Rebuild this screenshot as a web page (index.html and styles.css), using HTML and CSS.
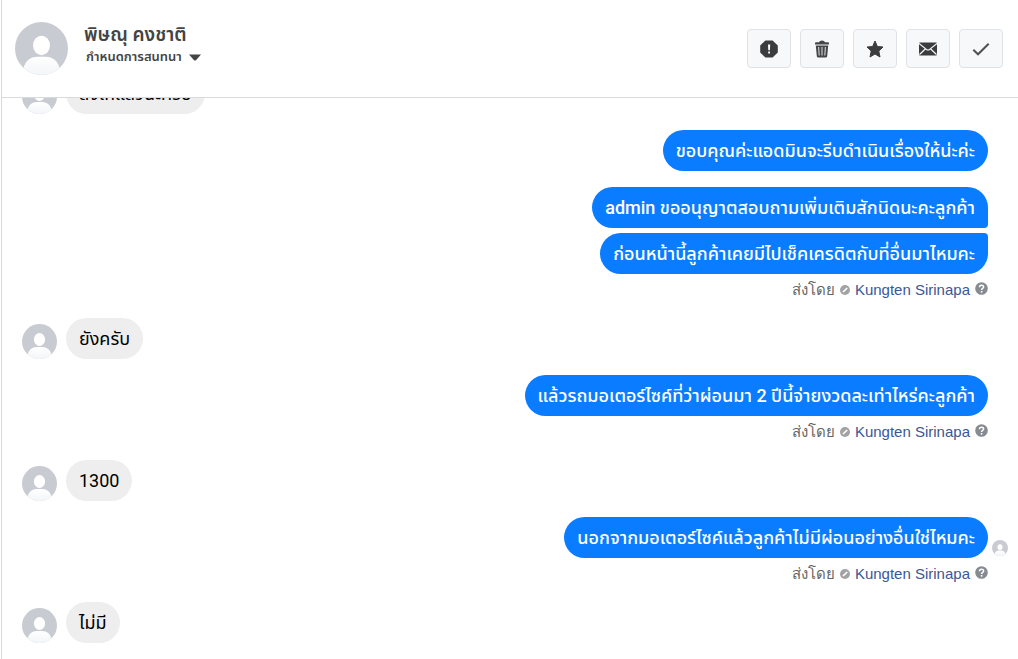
FILE: index.html
```html
<!DOCTYPE html>
<html lang="th">
<head>
    <meta charset="UTF-8">
    <meta name="viewport" content="width=device-width, initial-scale=1.0">
    <title>พิษณุ คงชาติ</title>
    <link rel="stylesheet" href="styles.css">
</head>
<body>
    <svg class="defs" aria-hidden="true">
        <defs>
            <linearGradient id="bodyFade" x1="0" y1="0" x2="0" y2="1">
                <stop offset="0" stop-color="#ffffff"/>
                <stop offset="1" stop-color="#f3f5f8"/>
            </linearGradient>
            <clipPath id="round"><circle cx="26" cy="26" r="26"/></clipPath>
            <symbol id="person" viewBox="0 0 52 52">
                <g clip-path="url(#round)">
                    <rect width="52" height="52" fill="#c8cbd1"/>
                    <ellipse cx="26" cy="23" rx="8.3" ry="9.5" fill="#fff"/>
                    <path d="M8 52V46C10 38 15 34 22 34H30C37 34 42 38 44 46V52Z" fill="url(#bodyFade)"/>
                </g>
            </symbol>
            <symbol id="pen" viewBox="0 0 10 10">
                <circle cx="5" cy="5" r="5" fill="#a3a3a3"/>
                <path d="M3 7L7.2 3" stroke="#fff" stroke-width="1.7"/>
            </symbol>
            <symbol id="help" viewBox="0 0 13 13">
                <circle cx="6.5" cy="6.5" r="6.3" fill="#868a91"/>
                <path d="M4.5 5.2C4.5 2.5 8.6 2.5 8.6 4.9C8.6 6.4 6.6 6.3 6.6 8" fill="none" stroke="#fff" stroke-width="1.5"/>
                <rect x="5.8" y="9" width="1.6" height="1.6" fill="#fff"/>
            </symbol>
        </defs>
    </svg>

    <div class="inbox">
        <header class="header">
            <svg class="avatar-large"><use href="#person"/></svg>
            <div class="contact">
                <h1>พิษณุ คงชาติ</h1>
                <button type="button" class="assign">
                    กำหนดการสนทนา
                    <svg width="12" height="7" viewBox="0 0 12 7"><path d="M0 0.5H12L7.2 6Q6 7.2 4.8 6Z" fill="#444"/></svg>
                </button>
            </div>
            <div class="actions">
                <button type="button" aria-label="สแปม">
                    <svg viewBox="0 0 18 18"><path d="M5.4 0.5H12.6L17.8 5.5V12.5L12.6 17.5H5.4L0.2 12.5V5.5Z" fill="#3b3c3e"/><path d="M8 4.5H10.2L9.9 10.3H8.3ZM8.2 11.5H10V13.4H8.2Z" fill="#fff"/></svg>
                </button>
                <button type="button" aria-label="ลบ">
                    <svg viewBox="0 0 18 18"><path d="M2 3.2Q2 2.2 3 2.2H6Q6.5 0.6 9 0.6T12 2.2H15Q16 2.2 16 3.2V4.4H2ZM2.8 5.5H15.2L14.2 16.2Q14 17.5 12.8 17.5H5.2Q4 17.5 3.8 16.2Z" fill="#454648"/><path d="M5.6 7L6.2 15.5M9 7V15.5M12.4 7L11.8 15.5" stroke="#d0d2d4" stroke-width="1.1"/></svg>
                </button>
                <button type="button" aria-label="ติดดาว">
                    <svg viewBox="0 0 18 18"><path d="M9 1L11.4 6.5L17 7L12.8 11L14 17L9 14L4 17L5.2 11L1 7L6.6 6.5Z" fill="#3b3c3e" stroke="#3b3c3e" stroke-width="1" stroke-linejoin="round"/></svg>
                </button>
                <button type="button" aria-label="ยังไม่ได้อ่าน">
                    <svg viewBox="0 0 18 18"><rect y="2.5" width="18" height="13" rx="1" fill="#3b3c3e"/><path d="M0 3.5L7.4 9.4Q9 10.6 10.6 9.4L18 3.5M0.5 14.5L6.3 9M17.5 14.5L11.7 9" fill="none" stroke="#f6f7f9" stroke-width="1.2"/></svg>
                </button>
                <button type="button" aria-label="เสร็จสิ้น">
                    <svg viewBox="0 0 18 18"><path d="M1.3 9.8L6 14.3L16.7 3.7" fill="none" stroke="#505154" stroke-width="2"/></svg>
                </button>
            </div>
        </header>

        <main class="chat">
            <div class="row">
                <svg class="avatar"><use href="#person"/></svg>
                <p class="bubble">ส่งให้แล้วนะครับ</p>
            </div>
            <div class="row out">
                <p class="bubble">ขอบคุณค่ะแอดมินจะรีบดำเนินเรื่องให้น่ะค่ะ</p>
            </div>
            <div class="group">
                <div class="row out">
                    <p class="bubble first">admin ขออนุญาตสอบถามเพิ่มเติมสักนิดนะคะลูกค้า</p>
                </div>
                <div class="row out">
                    <p class="bubble last">ก่อนหน้านี้ลูกค้าเคยมีไปเช็คเครดิตกับที่อื่นมาไหมคะ</p>
                </div>
                <div class="sender">ส่งโดย <svg class="pen"><use href="#pen"/></svg> <a href="#">Kungten Sirinapa</a> <svg class="help"><use href="#help"/></svg></div>
            </div>
            <div class="row">
                <svg class="avatar"><use href="#person"/></svg>
                <p class="bubble">ยังครับ</p>
            </div>
            <div class="group">
                <div class="row out">
                    <p class="bubble">แล้วรถมอเตอร์ไซค์ที่ว่าผ่อนมา 2 ปีนี้จ่ายงวดละเท่าไหร่คะลูกค้า</p>
                </div>
                <div class="sender">ส่งโดย <svg class="pen"><use href="#pen"/></svg> <a href="#">Kungten Sirinapa</a> <svg class="help"><use href="#help"/></svg></div>
            </div>
            <div class="row">
                <svg class="avatar"><use href="#person"/></svg>
                <p class="bubble">1300</p>
            </div>
            <div class="group">
                <div class="row out">
                    <p class="bubble">นอกจากมอเตอร์ไซค์แล้วลูกค้าไม่มีผ่อนอย่างอื่นใช่ไหมคะ</p>
                    <svg class="seen"><use href="#person"/></svg>
                </div>
                <div class="sender">ส่งโดย <svg class="pen"><use href="#pen"/></svg> <a href="#">Kungten Sirinapa</a> <svg class="help"><use href="#help"/></svg></div>
            </div>
            <div class="row">
                <svg class="avatar"><use href="#person"/></svg>
                <p class="bubble">ไม่มี</p>
            </div>
        </main>
    </div>
</body>
</html>
```

FILE: styles.css
```css
* {
    box-sizing: border-box;
}
body {
    margin: 0;
    background: #fff;
    font-family: Roboto, "Noto Sans Thai", "Noto Sans", sans-serif;
    color: #000;
}
h1, p {
    margin: 0;
}
button {
    font-family: inherit;
    cursor: pointer;
}
.defs {
    position: absolute;
    width: 0;
    height: 0;
}
.inbox {
    display: flex;
    flex-direction: column;
    height: 100vh;
    margin-left: 1px;
    border-left: 1px solid #d8dadd;
}

/* header */
.header {
    display: flex;
    flex: none;
    align-items: center;
    gap: 16px;
    padding: 22px 15px 22px 13px;
    border-bottom: 1px solid #d8dadd;
}
.avatar-large {
    width: 53px;
    height: 53px;
}
.contact {
    flex: 1;
    align-self: flex-start;
}
.contact h1 {
    font-size: 19px;
    line-height: 25px;
    font-weight: 600;
    color: #444;
}
.assign {
    display: flex;
    align-items: center;
    gap: 7px;
    padding: 0 2px;
    border: none;
    background: none;
    font-size: 13px;
    line-height: 20px;
    font-weight: 600;
    color: #444;
}
.actions {
    display: flex;
    gap: 9px;
}
.actions button {
    display: flex;
    align-items: center;
    justify-content: center;
    width: 44px;
    height: 39px;
    padding: 0;
    border: 1px solid #dfe2e6;
    border-radius: 4px;
    background: #f7f8fa;
}
.actions svg {
    width: 18px;
    height: 18px;
}

/* messages */
.chat {
    display: flex;
    flex: 1;
    flex-direction: column;
    justify-content: flex-end;
    gap: 16px;
    min-height: 0;
    padding: 0 30px 16px 20px;
    overflow: hidden;
}
.group {
    display: flex;
    flex-direction: column;
    gap: 5px;
}
.row {
    display: flex;
    align-items: flex-end;
    gap: 9px;
}
.avatar {
    flex: none;
    width: 35px;
    height: 35px;
}
.bubble {
    padding: 8px 13px;
    border-radius: 21px;
    background: #eee;
    font-size: 18px;
    line-height: 25px;
}
.out {
    position: relative;
    justify-content: flex-end;
}
.out .bubble {
    background: #0a7cff;
    font-weight: 500;
    color: #fff;
}
.out .first {
    border-bottom-right-radius: 4px;
}
.out .last {
    border-top-right-radius: 4px;
}
.seen {
    position: absolute;
    right: -20px;
    bottom: 2px;
    width: 16px;
    height: 16px;
}
.sender {
    display: flex;
    align-items: center;
    justify-content: flex-end;
    gap: 5px;
    padding-bottom: 2px;
    font-family: "Liberation Sans", Arial, sans-serif;
    font-size: 15px;
    line-height: 21px;
    color: #666;
}
.sender a {
    color: #385898;
    text-decoration: none;
}
.pen {
    width: 10px;
    height: 10px;
}
.help {
    width: 13px;
    height: 13px;
    margin-bottom: 3px;
}
```
